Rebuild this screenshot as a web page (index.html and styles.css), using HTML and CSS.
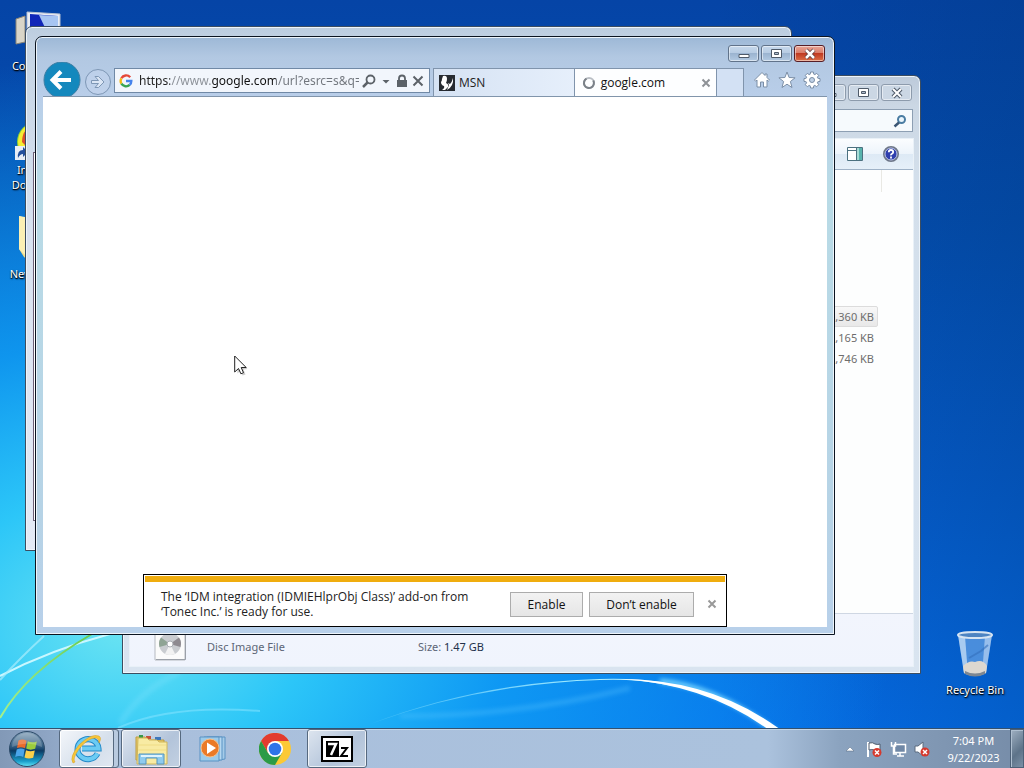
FILE: index.html
```
<!DOCTYPE html>
<html lang="en">
<head>
    <meta charset="UTF-8">
    <meta name="viewport" content="width=device-width, initial-scale=1.0">
    <title>Desktop</title>
    <link rel="stylesheet" href="styles.css">
</head>
<body>

    <main class="desktop">
        <!-- wallpaper light streaks -->
        <svg class="wallpaper" viewBox="0 0 1024 728" preserveAspectRatio="xMidYMax slice" aria-hidden="true">
            <defs>
                <linearGradient id="arc" x1="370" x2="780" y1="0" y2="0" gradientUnits="userSpaceOnUse">
                    <stop offset="0" stop-color="#9eeaff" stop-opacity="0.2"/>
                    <stop offset="0.5" stop-color="#9eeaff"/>
                    <stop offset="1" stop-color="#fff"/>
                </linearGradient>
                <linearGradient id="leaf" x1="0" x2="100" y1="0" y2="0" gradientUnits="userSpaceOnUse">
                    <stop offset="0" stop-color="#a4f08c"/>
                    <stop offset="1" stop-color="#63c848"/>
                </linearGradient>
                <filter id="soft" x="-10%" y="-40%" width="120%" height="180%"><feGaussianBlur stdDeviation="2"/></filter>
            </defs>
            <path d="M660 681 Q716 686 776 732" fill="none" stroke="#6fd0ff" stroke-width="5" filter="url(#soft)"/>
            <path d="M370 724 Q480 682 600 679 Q620 678 640 680 Q666 681 692 690 Q660 683 640 681 Q620 679 600 680 Q480 684 370 724z" fill="url(#arc)"/>
            <path d="M620 679 Q712 679 781 730 L769 730 Q706 684 620 679z" fill="#fff"/>
            <path d="M400 716 Q520 716 630 688" fill="none" stroke="#58c4ff" stroke-width="5" opacity="0.35" filter="url(#soft)"/>
            <path d="M0 676 Q50 650 110 634" fill="none" stroke="#c9f7ff" stroke-width="2"/>
            <path d="M0 680 Q20 658 44 636" fill="none" stroke="#a9ecfc" stroke-width="2" opacity="0.7"/>
            <path d="M0 718 Q26 672 92 634" fill="none" stroke="url(#leaf)" stroke-width="2"/>
            <path d="M118 728 Q170 704 260 711" fill="none" stroke="#8be6ff" stroke-width="2" opacity="0.5"/>
            <path d="M120 724 Q140 690 180 672" fill="none" stroke="#8be6ff" stroke-width="6" opacity="0.25" filter="url(#soft)"/>
        </svg>

        <div class="shortcut computer">
            <svg width="56" height="44" viewBox="0 0 56 44">
                <path d="M6 9l9-3v26l-9 2z" fill="#d9d5c8" stroke="#8b8577"/>
                <path d="M17 2l33 2v26l-33-2z" fill="#e9edf4" stroke="#b6c0d2"/>
                <path d="M20 4l28 2v21l-28-2z" fill="#1026b8"/>
                <path d="M29 5l19 1v21l-9-1z" fill="#a7c5f2"/>
            </svg>
            <span>Computer</span>
        </div>
        <div class="shortcut idm">
            <svg width="46" height="40" viewBox="0 0 46 40">
                <circle cx="22" cy="20" r="20" fill="#8ad438"/>
                <path d="M4 26a20 20 0 0 1 18-26v10a12 12 0 0 0-9 16z" fill="#f5ec34"/>
                <path d="M7 20q0-15 15-17v17q-8 0-9 6z" fill="#d8502c"/>
                <path d="M0 24h14v14h-14z" fill="#e8eef6"/>
                <path d="M3 36q-1-8 5-8v-3l5 5-5 5v-3q-3 0-5 4z" fill="#234f9b"/>
            </svg>
            <span>Internet Download</span>
        </div>
        <div class="shortcut folder">
            <svg width="40" height="46" viewBox="0 0 40 46">
                <path d="M1 1l10 3v42l-5-4-5-8z" fill="#f3df89"/>
                <path d="M1 1l6 1v38l-6-6z" fill="#fbf0b4"/>
                <path d="M7 2h30v42h-26z" fill="#e8c964"/>
            </svg>
            <span>New folder</span>
        </div>
        <div class="shortcut bin">
            <svg width="38" height="46" viewBox="0 0 38 46">
                <path d="M2 4L8 42q11 6 22 0L36 4z" fill="#6ea8e6" fill-opacity="0.65"/>
                <path d="M2 4L8 42l4 2L9 5z" fill="#dcecfb" fill-opacity="0.65"/>
                <path d="M36 4L30 42l-4 2L29 5z" fill="#cbe0f6" fill-opacity="0.6"/>
                <path d="M7 35q6-6 12-4 8-3 12 4l-1 7q-11 6-22 0z" fill="#ddd8d0"/>
                <path d="M9 40q10 5 20 0v3q-10 5-20 0z" fill="#7e8791"/>
                <path d="M13 27l12-7 7-6" stroke="#3370bd" stroke-width="2" fill="none" opacity="0.6"/>
                <ellipse cx="19" cy="4" rx="17" ry="3" fill="#4d84c2" stroke="#d6e4f2" stroke-width="2"/>
            </svg>
            <span>Recycle Bin</span>
        </div>

        <section class="window back-window" aria-label="Background window">
            <div class="back-body"></div>
        </section>

        <section class="window explorer" aria-label="File explorer">
            <div class="caption">
                <button class="cap" aria-label="Minimize"><svg width="14" height="12" viewBox="0 0 14 12"><path d="M2 6.500h10v3h-10z" fill="#fff" stroke="#4e5a69"/></svg></button>
                <button class="cap" aria-label="Maximize"><svg width="14" height="12" viewBox="0 0 14 12"><path d="M1.500 1.500h10v8h-10z" fill="#fff" stroke="#4e5a69"/><path d="M4.500 4.500h4v2h-4z" fill="#aebccd" stroke="#4e5a69"/></svg></button>
                <button class="cap" aria-label="Close"><svg width="14" height="12" viewBox="0 0 14 12"><path d="M3 2l8 8M11 2l-8 8" stroke="#4e5a69" stroke-width="4"/><path d="M3 2l8 8M11 2l-8 8" stroke="#fff" stroke-width="2"/></svg></button>
            </div>
            <div class="search-row">
                <input type="search" aria-label="Search">
                <svg width="14" height="14" viewBox="0 0 14 14"><circle cx="8.500" cy="5.500" r="3.500" fill="#eaf5fc" stroke="#4a7ca2" stroke-width="2"/><path d="M6 8.500L1.500 12.500" stroke="#3a5674" stroke-width="2.500"/></svg>
            </div>
            <div class="explorer-client">
                <div class="toolbar">
                    <button aria-label="Preview pane"><svg width="16" height="14" viewBox="0 0 16 14"><path d="M.5.500h15v13h-15z" fill="#fff" stroke="#4c7180"/><path d="M1 3.500h9M9.500 1v12" stroke="#4c7180"/><path d="M10 1h5v12h-5z" fill="#58b3ad"/><path d="M10 1h2v12h-2z" fill="#a8dcd6"/></svg></button>
                    <button aria-label="Help"><svg width="16" height="16" viewBox="0 0 16 16"><circle cx="8" cy="8" r="7" fill="#2f3fae" stroke="#6d7688" stroke-width="2"/><circle cx="8" cy="8" r="6" fill="none" stroke="#b9c3e8"/><path d="M5.800 6.200q0-2.200 2.200-2.200t2.200 2q0 1.200-1.200 1.800t-1 1.600M8 10.500v2" fill="none" stroke="#fff" stroke-width="1.800"/></svg></button>
                </div>
                <div class="files">
                    <div class="column-head"></div>
                    <table>
                        <tbody>
                            <tr class="picked"><td>,360 KB</td></tr>
                            <tr><td>,165 KB</td></tr>
                            <tr><td>,746 KB</td></tr>
                        </tbody>
                    </table>
                </div>
                <div class="details">
                    <svg class="disc" width="32" height="40" viewBox="0 0 32 40">
                        <path d="M1 0h30v39h-30z" fill="#fbfbfb" stroke="#b5b9c0"/>
                        <path d="M2 38.500h29.500v-38" fill="none" stroke="#9ba0a8"/>
                        <circle cx="16" cy="23" r="11" fill="#c9ccd0"/>
                        <path d="M16 23L7 16.500A11 11 0 0 0 5.500 26z" fill="#8fa494"/>
                        <path d="M16 23l9-6.500A11 11 0 0 1 26.500 26z" fill="#8e8a90"/>
                        <path d="M16 23l-5 9.800a11 11 0 0 0 10 0z" fill="#f2f2f2"/>
                        <circle cx="16" cy="23" r="3" fill="#fff" stroke="#a9adb2"/>
                    </svg>
                    <span class="kind">Disc Image File</span>
                    <span class="size">Size: <b>1.47 GB</b></span>
                </div>
            </div>
        </section>

        <section class="window browser" aria-label="Internet Explorer">
            <div class="caption">
                <button class="cap" aria-label="Minimize"><svg width="14" height="12" viewBox="0 0 14 12"><path d="M2 6.500h10v3h-10z" fill="#fff" stroke="#4e5a69"/></svg></button>
                <button class="cap" aria-label="Maximize"><svg width="14" height="12" viewBox="0 0 14 12"><path d="M1.500 1.500h10v8h-10z" fill="#fff" stroke="#4e5a69"/><path d="M4.500 4.500h4v2h-4z" fill="#aebccd" stroke="#4e5a69"/></svg></button>
                <button class="cap close" aria-label="Close"><svg width="14" height="12" viewBox="0 0 14 12"><path d="M3 2l8 8M11 2l-8 8" stroke="#5c3a3c" stroke-width="4"/><path d="M3 2l8 8M11 2l-8 8" stroke="#fff" stroke-width="2.500"/></svg></button>
            </div>
            <div class="nav">
                <button class="back" aria-label="Back"><svg width="38" height="38" viewBox="0 0 38 38"><circle cx="19" cy="19" r="18" fill="#1488bd" stroke="#3d7ea4"/><path d="M10 19h18M18 10.500L9.500 19l8.500 8.500" fill="none" stroke="#fff" stroke-width="4"/></svg></button>
                <button class="forward" aria-label="Forward"><svg width="28" height="28" viewBox="0 0 28 28"><circle cx="14" cy="14" r="12.500" fill="#c3d4ec" fill-opacity="0.6" stroke="#7e97b5"/><path d="M7.500 12.500h7l-3.500-4h3.500l5.500 5.500-5.500 5.500h-3.500l3.500-4h-7z" fill="#dbe6f5" stroke="#7e97b5"/></svg></button>
                <div class="address">
                    <svg width="14" height="14" viewBox="0 0 14 14" fill="none" stroke-width="2.400"><path d="M11.200 3.200A5.400 5.400 0 0 0 2.400 4.300" stroke="#e5483a"/><path d="M2.400 4.300A5.400 5.400 0 0 0 2.400 9.700" stroke="#f3b915"/><path d="M2.400 9.700A5.400 5.400 0 0 0 10.700 10.900" stroke="#37a452"/><path d="M7 7h5.300Q12.300 9.600 10.700 10.900" stroke="#4583ec"/></svg>
                    <input type="text" aria-label="Address" value="https://www.google.com/url?esrc=s&amp;q=&amp;rct=j">
                    <button aria-label="Search"><svg width="16" height="14" viewBox="0 0 16 14"><circle cx="9.500" cy="5.500" r="4" fill="none" stroke="#5c6268" stroke-width="1.800"/><path d="M6.500 8.500L2 13" stroke="#5c6268" stroke-width="2.500"/></svg></button>
                    <button aria-label="Show address list"><svg width="14" height="14" viewBox="0 0 14 14"><path d="M3.500 6h7L7 9.500z" fill="#5c6268"/></svg></button>
                    <button aria-label="Security report"><svg width="14" height="14" viewBox="0 0 14 14"><path d="M2 6h10v7h-10z" fill="#5c6268"/><path d="M4 6.500V4.500a3 3 0 0 1 6 0v2" fill="none" stroke="#5c6268" stroke-width="1.800"/></svg></button>
                    <button aria-label="Stop"><svg width="14" height="14" viewBox="0 0 14 14"><path d="M2.500 2.500l9 9M11.500 2.500l-9 9" stroke="#5c6268" stroke-width="2"/></svg></button>
                </div>
                <div class="tabs">
                    <a class="tab" href="#msn"><svg width="16" height="16" viewBox="0 0 16 16"><path d="M0 0h16v16h-16z" fill="#262a30"/><path d="M4 1q4-1 4 3 0 2-1 4 3 1 2 4l-3 3h-3q3-2 2-4-3-1-3-4 1-1 1-3z" fill="#fff"/><path d="M14 3q1 8-6 12l2-5-1-2 2 1q2-2 3-6z" fill="#fff"/></svg>MSN</a>
                    <a class="tab active" href="#google"><svg width="14" height="14" viewBox="0 0 14 14"><circle cx="7" cy="7" r="5" fill="none" stroke="#b9bec4" stroke-width="2"/><path d="M4.500 2.600A5 5 0 1 0 11.300 4.500" fill="none" stroke="#7b8188" stroke-width="2"/></svg>google.com<button aria-label="Close tab"><svg width="10" height="10" viewBox="0 0 10 10"><path d="M1.500 1.500l7 7M8.500 1.500l-7 7" stroke="#8e9297" stroke-width="2"/></svg></button></a>
                    <button class="new-tab" aria-label="New tab"></button>
                </div>
                <div class="tools">
                    <button aria-label="Home"><svg width="18" height="18" viewBox="0 0 18 18"><path d="M9 1.500L1.500 9l1.200 1.200L4 9v7h3.500v-5h3v5H14V9l1.300 1.200L16.500 9 14 6.500V3h-2v1.500z" fill="#fff" stroke="#7b8ea6"/></svg></button>
                    <button aria-label="Favorites"><svg width="18" height="18" viewBox="0 0 18 18"><path d="M9 1l2.100 5.500 6 .3-4.700 3.700 1.600 6L9 13.200 4 16.500l1.600-6L.9 6.800l6-.3z" fill="#fff" stroke="#7b8ea6"/></svg></button>
                    <button aria-label="Tools"><svg width="18" height="18" viewBox="0 0 18 18"><path d="M7.600 1h2.800l.4 2.200 1 .4 1.900-1.200 2 2-1.300 1.800.4 1 2.200.4v2.800l-2.200.4-.4 1 1.300 1.900-2 2-1.900-1.300-1 .4-.4 2.200H7.600l-.4-2.200-1-.4-1.900 1.300-2-2 1.300-1.900-.4-1L1 10.400V7.600l2.200-.4.4-1-1.300-1.800 2-2 1.900 1.200 1-.4z" fill="#fff" stroke="#7b8ea6"/><circle cx="9" cy="9" r="2.500" fill="#c0d1e6" stroke="#7b8ea6"/></svg></button>
                </div>
            </div>
            <div class="page">
                <div class="notice" role="alert">
                    <p>The ‘IDM integration (IDMIEHlprObj Class)’ add-on from ‘Tonec Inc.’ is ready for use.</p>
                    <button class="btn enable">Enable</button>
                    <button class="btn">Don’t enable</button>
                    <button class="dismiss" aria-label="Close"><svg width="10" height="10" viewBox="0 0 10 10"><path d="M1.500 1.500l7 7M8.500 1.500l-7 7" stroke="#999" stroke-width="2"/></svg></button>
                </div>
            </div>
        </section>

        <svg class="cursor" width="16" height="22" viewBox="0 0 16 22"><path d="M2.500 3l11 11-4 .5 2 5-3 1-2-5-3 3z" fill="#000" opacity="0.2"/><path d="M.7 1v16l3.800-3.500 2.400 5.300 2.600-1.100-2.300-5.200h5z" fill="#fff" stroke="#222"/></svg>
    </main>

    <footer class="taskbar">
        <button class="orb" aria-label="Start">
            <svg width="38" height="38" viewBox="0 0 38 38">
                <defs>
                    <linearGradient id="orb" x1="0" x2="0" y1="0" y2="1">
                        <stop offset="0" stop-color="#8aa5bc"/><stop offset="0.450" stop-color="#2b577c"/><stop offset="0.550" stop-color="#0b3a63"/><stop offset="0.850" stop-color="#1a9fcb"/><stop offset="1" stop-color="#65e4f6"/>
                    </linearGradient>
                </defs>
                <circle cx="19" cy="19" r="17.500" fill="url(#orb)" stroke="#2c4a68"/>
                <path d="M10.500 10.500q4-2 8 .2l-1.500 7.500q-4-2-8-.2z" fill="#ec6b2b"/>
                <path d="M19.800 11.300q4 2 9 .2l-1.600 7.300q-5 1.800-9-.3z" fill="#9bcc3c"/>
                <path d="M8.700 19.600q4-2 8-.1L15.200 27q-4-2-8 0z" fill="#4aa5ea"/>
                <path d="M18 20.200q4 2 8.800.3l-1.600 7.200q-4.700 1.800-8.700-.3z" fill="#fcd04a"/>
                <path d="M4 17a15 14 0 0 1 30 0q-15-7-30 0z" fill="#fff" opacity="0.200"/>
            </svg>
        </button>
        <button class="task stacked" aria-label="Internet Explorer">
            <svg width="34" height="34" viewBox="0 0 34 34">
                <path d="M27.500 21.500a10.500 10 0 1 1 1-5H12" fill="none" stroke="#2389c8" stroke-width="6"/>
                <path d="M27.500 21.500a10.500 10 0 1 1 1-5H12" fill="none" stroke="#6bcbf3" stroke-width="4"/>
                <path d="M3 31Q-1 25 9 13 21 1 29 4q3 2 0 7 0-5-4-5-7 0-16 11-7 10-4 13z" fill="#f6c63a" stroke="#d79b18" stroke-width="0.500"/>
            </svg>
        </button>
        <button class="task" aria-label="File explorer">
            <svg width="36" height="34" viewBox="0 0 36 34">
                <path d="M3 5h9l2 3h17v20H3z" fill="#e8cd6c" stroke="#bd9b3f"/>
                <path d="M6 3h4v3h-4z" fill="#37984a"/><path d="M13 4h5v3h-5z" fill="#c7503b"/><path d="M22 5h6v3h-6z" fill="#3d77bb"/>
                <path d="M5 6h9l2 2h8l2 2h8v22H4z" fill="#f8eba3" stroke="#cfb55a"/>
                <path d="M5 13h28M5 18h28" stroke="#efdc85"/>
                <path d="M6 32v-10h25v10h-7v-6h-11v6z" fill="#8fcbee" stroke="#5795bd"/>
                <path d="M8 24h21" stroke="#dff3fd" stroke-width="2"/>
            </svg>
        </button>
        <button class="task flat" aria-label="Media Player">
            <svg width="30" height="30" viewBox="0 0 30 30">
                <path d="M9 3h18v22l-6 1z" fill="#a5cbe8" stroke="#5b93c4"/>
                <path d="M6 3h18v23h-18z" fill="#b6d8f0" stroke="#5b93c4"/>
                <path d="M2 3h19v24h-19z" fill="#9ccbea" stroke="#5b93c4"/>
                <circle cx="12" cy="14" r="9" fill="#ea7a27" stroke="#f6c08a"/>
                <path d="M9 8.500l9 5.500-9 6z" fill="#fff"/>
            </svg>
        </button>
        <button class="task flat" aria-label="Chrome">
            <svg width="32" height="32" viewBox="0 0 32 32">
                <circle cx="16" cy="16" r="16" fill="#fcc934"/>
                <path d="M2.100 8A16 16 0 0 1 29.900 8H16L9.100 20z" fill="#e33b2e"/>
                <path d="M2.100 8A16 16 0 0 0 16 32l6.900-12-13.800 0z" fill="#2a9b47"/>
                <circle cx="16" cy="16" r="8" fill="#fff"/>
                <circle cx="16" cy="16" r="6.300" fill="#2f74e8"/>
            </svg>
        </button>
        <button class="task" aria-label="7-Zip">
            <svg width="32" height="26" viewBox="0 0 32 26">
                <path d="M1 1h30v24h-30z" fill="#fff" stroke="#000" stroke-width="2"/>
                <path d="M5 5h13v16h-13z" fill="#000"/>
                <path d="M7 8h8l-5 11" fill="none" stroke="#fff" stroke-width="2.500"/>
                <path d="M20 12h6l-6 8h7" fill="none" stroke="#000" stroke-width="2"/>
            </svg>
        </button>

        <div class="tray">
            <button aria-label="Show hidden icons"><svg width="10" height="6" viewBox="0 0 10 6"><path d="M1 5L5 1l4 4z" fill="#fff" stroke="#53667f" stroke-width="0.500"/></svg></button>
            <button aria-label="Action Center"><svg width="18" height="18" viewBox="0 0 18 18"><path d="M3 2v15" stroke="#fff" stroke-width="2"/><path d="M4 3q4-1 6 1 3 1 5 0v7q-4 1-6-1-2-1-5 0z" fill="#fff" stroke="#4e5c6e"/><circle cx="12" cy="12.500" r="4.500" fill="#d5392e"/><path d="M10 10.500l4 4M14 10.500l-4 4" stroke="#fff" stroke-width="1.500"/></svg></button>
            <button aria-label="Network"><svg width="18" height="18" viewBox="0 0 18 18"><path d="M5.500 4.500h11v8h-11z" fill="#7088a6" stroke="#fff" stroke-width="1.500"/><path d="M11 13v3M8 16h7" stroke="#fff" stroke-width="1.500"/><path d="M2.500 2v4h4V2M4.500 6v8H8" fill="none" stroke="#fff" stroke-width="1.500"/></svg></button>
            <button aria-label="Volume"><svg width="18" height="18" viewBox="0 0 18 18"><path d="M2 6h3l5-4v14l-5-4h-3z" fill="#fff" stroke="#5b6a7e"/><circle cx="12" cy="12" r="4.500" fill="#d5392e"/><path d="M10 10l4 4M14 10l-4 4" stroke="#fff" stroke-width="1.500"/></svg></button>
            <div class="clock">7:04 PM<br>9/22/2023</div>
        </div>
        <button class="show-desktop" aria-label="Show desktop"></button>
    </footer>

</body>
</html>
```
FILE: styles.css
```
* {
    box-sizing: border-box;
}

body {
    margin: 0;
    height: 100vh;
    display: flex;
    flex-direction: column;
    overflow: hidden;
    font-family: "Open Sans", "Noto Sans", sans-serif;
    font-size: 12px;
    color: #222;
}

button {
    padding: 0;
    border: none;
    background: none;
    font: inherit;
    color: inherit;
}

svg {
    display: block;
    flex: none;
}

/* desktop */

.desktop {
    position: relative;
    flex: 1;
    overflow: hidden;
    background:
        radial-gradient(ellipse 75% 78% at 12% 86%, #6be4f2 0%, #2cc6f8 24%, rgba(16, 160, 246, 0.85) 50%, rgba(6, 110, 230, 0) 100%),
        linear-gradient(90deg, rgba(0, 50, 150, 0) 70%, rgba(0, 50, 110, 0.25) 100%),
        linear-gradient(180deg, #0544a6 0%, #044eb0 30%, #055ccc 65%, #056eea 100%);
}

.wallpaper {
    position: absolute;
    width: 100%;
    height: 100%;
}

.shortcut {
    position: absolute;
    width: 74px;
    display: flex;
    flex-direction: column;
    align-items: center;
    text-align: center;
    font-family: "Noto Sans", sans-serif;
    font-size: 11px;
    line-height: 15px;
    color: #fff;
    text-shadow: 1px 1px 2px #000, 0 1px 1px #000;
}

.computer {
    left: 1px;
    top: 10px;
    gap: 4px;
}

.idm {
    left: 1px;
    top: 122px;
}

.folder {
    left: 1px;
    top: 215px;
    gap: 5px;
}

.bin {
    right: 12px;
    bottom: 31px;
    gap: 5px;
}

/* windows */

.window {
    position: absolute;
    display: flex;
    flex-direction: column;
    border: 1px solid #3c4d60;
    border-radius: 7px 7px 0 0;
    box-shadow: inset 0 0 0 1px #eef5fb;
    background: #d3e0ed;
}

.back-window {
    left: 25px;
    top: 26px;
    right: 232px;
    bottom: 177px;
    padding: 125px 7px 29px;
    background: linear-gradient(180deg, #bccddf, #c5d4e4 20px, #d8e1ef 200px, #e4eaf5);
}

.back-body {
    flex: 1;
    border: 1px solid #6d6076;
    background: #fff;
}

.caption {
    display: flex;
    justify-content: flex-end;
    gap: 2px;
}

.cap {
    width: 31px;
    height: 17px;
    display: flex;
    justify-content: center;
    align-items: center;
    border: 1px solid #61738a;
    border-radius: 3px;
    box-shadow: inset 0 0 0 1px rgba(255, 255, 255, 0.5);
    background: linear-gradient(180deg, #c6d8ec 0%, #b6cbe2 50%, #9bb4d0 50%, #b3cae2 100%);
}

.explorer .cap {
    border-color: #8d9bac;
    background: #cbd7e4;
}

.close {
    border-color: #561e26;
    background: linear-gradient(180deg, #e8a596 0%, #d97a66 50%, #c03a22 50%, #dc7048 100%);
}

/* explorer */

.explorer {
    left: 122px;
    top: 75px;
    right: 103px;
    bottom: 54px;
    padding: 8px 6px 6px;
    background: linear-gradient(180deg, #bccada 0, #cbd7e4 30px, #d3dfeb 100px, #d9e4f0 100%);
}

.explorer .caption {
    padding-right: 2px;
}

.search-row {
    align-self: flex-end;
    width: 220px;
    height: 23px;
    margin: 8px 1px 0 0;
    padding-right: 5px;
    display: flex;
    align-items: center;
    border: 1px solid #8d9fb3;
    background: #f6fafd;
}

.search-row input {
    flex: 1;
    min-width: 0;
    border: none;
    outline: none;
    background: none;
}

.explorer-client {
    flex: 1;
    display: flex;
    flex-direction: column;
    margin-top: 6px;
    border: 1px solid #e9f1f8;
    background: #fdfefe;
}

.toolbar {
    height: 31px;
    display: flex;
    justify-content: flex-end;
    align-items: center;
    gap: 20px;
    padding-right: 14px;
    border-bottom: 1px solid #9fb2c7;
    background: linear-gradient(180deg, #fbfdff 0%, #edf4fb 50%, #dde9f5 50%, #e6f0f9 100%);
}

.files {
    flex: 1;
}

.column-head {
    width: 752px;
    height: 22px;
    border-right: 1px solid #e9e9e4;
}

table {
    width: 748px;
    margin-top: 114px;
    border-collapse: separate;
    border-spacing: 0;
}

td {
    height: 21px;
    padding: 0 4px 0 0;
    text-align: right;
    color: #6d6d6d;
    font-family: "Noto Sans", sans-serif;
    font-size: 11px;
    line-height: 19px;
}

.picked td {
    border: 1px solid #dcdcdc;
    border-radius: 2px;
    padding-right: 3px;
    background: linear-gradient(180deg, #f8f8f8, #e8e8e8);
}

.details {
    height: 53px;
    display: flex;
    align-items: flex-end;
    padding: 0 0 5px 24px;
    border-top: 1px solid #cfd7e3;
    background: linear-gradient(180deg, #f2f5fd, #f0f4fd);
    font-family: "Noto Sans", sans-serif;
    font-size: 11px;
    line-height: 18px;
    color: #5c6576;
}

.kind,
.size {
    margin-bottom: 5px;
}

.kind {
    width: 211px;
    margin-left: 21px;
}

.size b {
    font-weight: 400;
    color: #22304a;
}

/* browser */

.browser {
    left: 35px;
    top: 36px;
    right: 189px;
    bottom: 93px;
    padding: 8px 7px 7px;
    border-color: #0b1420;
    background: linear-gradient(180deg, #9db8d6 0, #b2c8e2 20px, #b9cee9 60px, #b9dbe6 150px, #b6d3e6 80%, #b8d0ea 100%);
}

.browser .caption {
    padding-right: 2px;
}

.nav {
    height: 35px;
    display: flex;
    align-items: flex-end;
    border-bottom: 1px solid #8195ab;
    overflow: hidden;
}

.back {
    height: 35px;
}

.forward {
    height: 29px;
    margin-left: 3px;
}

.address {
    flex: 306;
    min-width: 0;
    height: 25px;
    margin: 0 3px 3px 2px;
    padding: 0 4px 0 4px;
    display: flex;
    align-items: center;
    gap: 2px;
    border: 1px solid #7089a6;
    background: #f2f6fc;
}

/* the host name reads darker than the rest of the address */
.address input {
    flex: 1;
    min-width: 0;
    margin: 0 0 0 4px;
    padding: 0;
    border: none;
    outline: none;
    font-family: "Noto Sans", sans-serif;
    font-size: 12px;
    color: transparent;
    background: linear-gradient(90deg, #222 31px, #8a8f96 31px, #8a8f96 72px, #111 72px, #111 137px, #70757c 137px);
    -webkit-background-clip: text;
    background-clip: text;
}

.tabs {
    flex: 309;
    min-width: 0;
    height: 28px;
    display: flex;
    border: 1px solid #8094ac;
    border-bottom: none;
}

.tab {
    flex: 131;
    min-width: 0;
    display: flex;
    align-items: center;
    gap: 4px;
    padding: 0 5px;
    border-right: 1px solid #8094ac;
    background: linear-gradient(90deg, #d5e2f3, #e6effb);
    font-size: 12px;
    color: #222;
    text-decoration: none;
}

.tab.active {
    gap: 5px;
    padding-left: 7px;
    background: #fdfeff;
    color: #111;
}

.tab.active button {
    margin-left: auto;
}

.new-tab {
    flex: 26;
    background: #d3e1f4;
}

.tools {
    display: flex;
    gap: 7px;
    margin: 0 6px 7px 9px;
}

.page {
    flex: 1;
    display: flex;
    flex-direction: column;
    justify-content: flex-end;
    background: #fff;
}

.notice {
    display: flex;
    align-items: center;
    margin: 0 100px;
    padding: 7px 9px 0 17px;
    height: 53px;
    border: 1px solid #000;
    background: linear-gradient(#f0ad0e, #f0ad0e) 1px 1px / calc(100% - 2px) 6px no-repeat #fff;
}

.notice p {
    flex: 1;
    margin: 0 40px 0 0;
    font-size: 12px;
    line-height: 15px;
}

.btn {
    width: 105px;
    height: 25px;
    border: 1px solid #acacac;
    background: linear-gradient(180deg, #f2f2f2, #e6e6e6);
    color: #111;
}

.enable {
    width: 73px;
    margin-right: 6px;
}

.dismiss {
    margin-left: 13px;
}

.cursor {
    position: absolute;
    left: 234px;
    top: 355px;
}

/* taskbar */

.taskbar {
    height: 40px;
    display: flex;
    border-top: 1px solid #34516f;
    box-shadow: inset 0 1px 0 #c3d6e8;
    background: linear-gradient(90deg, #8299b7 0, #8da4c3 45px, #a9bfdc 130px, #abc2dd 75%, #8ba3bf 82%, #768ca8 100%);
}

.orb {
    margin: 0 13px 0 8px;
}

.task {
    width: 60px;
    margin-right: 2px;
    display: flex;
    justify-content: center;
    align-items: center;
    border: 1px solid #56697f;
    border-radius: 3px;
    box-shadow: inset 0 0 0 1px rgba(255, 255, 255, 0.7);
    background: linear-gradient(135deg, #dde5ef, #b3c4da 60%, #c3d1e2);
}

.stacked {
    padding-right: 4px;
    box-shadow: inset -4px 0 0 #b9cadf, inset -5px 0 0 #56697f, inset 0 0 0 1px #fff;
    background: linear-gradient(135deg, #f3f6fa, #d5dfeb 60%, #e2e9f2);
}

.flat {
    border-color: transparent;
    box-shadow: none;
    background: none;
}

.tray {
    display: flex;
    align-items: center;
    gap: 6px;
    margin-left: auto;
}

.tray button:first-child {
    margin-right: 4px;
}

.clock {
    width: 73px;
    text-align: center;
    font-family: "Noto Sans", sans-serif;
    font-size: 11px;
    line-height: 17px;
    color: #fff;
}

.show-desktop {
    width: 14px;
    border: 1px solid #4d6178;
    box-shadow: inset 1px 1px 0 #aebfd0;
    background: linear-gradient(135deg, #9fb0c2, #5d7389 60%, #7b90a6);
}
```
